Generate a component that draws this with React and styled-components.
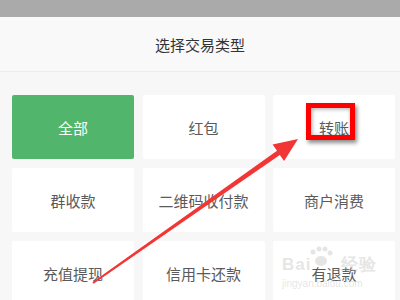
import React from 'react'
import styled, { createGlobalStyle } from 'styled-components'

const GlobalStyle = createGlobalStyle`
  body {
    margin: 0;
    background: #f7f7f7;
    font-family: "Noto Sans CJK SC", "Noto Sans", sans-serif;
  }
`

const Page = styled.div`
  position: relative;
  width: 400px;
  height: 300px;
  overflow: hidden;
  background: #f7f7f7;
`

const StatusBar = styled.div`
  height: 17px;
  background: #aaaaaa;
`

const Header = styled.header`
  height: 54px;
  display: flex;
  align-items: center;
  justify-content: center;
  background: #f9f9f9;
  border-bottom: 1px solid #ececec;
  color: #333;
  font-size: 15px;
`

const Grid = styled.div`
  display: grid;
  grid-template-columns: repeat(3, 122px);
  grid-auto-rows: 64px;
  column-gap: 8.5px;
  row-gap: 9px;
  padding: 23px 0 0 12px;
`

const Card = styled.div`
  position: relative;
  display: flex;
  align-items: center;
  justify-content: center;
  border-radius: 2px;
  font-size: 15px;
  background: ${p => (p.$active ? '#51b56c' : '#ffffff')};
  color: ${p => (p.$active ? '#ffffff' : '#5a5a5a')};
`

const Highlight = styled.div`
  position: absolute;
  left: 33px;
  top: 8px;
  width: 49px;
  height: 37px;
  box-sizing: border-box;
  border: 5px solid #ff0000;
  box-shadow: 2px 3px 4px rgba(0, 0, 0, 0.45), inset 1px 1px 4px rgba(0, 0, 0, 0.35);
`

const Overlay = styled.svg`
  position: absolute;
  left: 0;
  top: 0;
  pointer-events: none;
`

const Watermark = styled.div`
  position: absolute;
  left: 282px;
  top: 256px;
  display: flex;
  flex-direction: column;
  color: rgba(190, 190, 190, 0.4);
  font-family: "Liberation Sans", sans-serif;
  pointer-events: none;
`

const MarkTop = styled.div`
  display: flex;
  gap: 30px;
  font-size: 17px;
  font-weight: bold;
  letter-spacing: 1px;
  line-height: 18px;
`

const MarkBottom = styled.span`
  font-size: 10px;
  line-height: 12px;
  margin-top: 4px;
`

const types = [
  '全部', '红包', '转账',
  '群收款', '二维码收付款', '商户消费',
  '充值提现', '信用卡还款', '有退款',
]

const App = () => {
  return (
    <Page>
      <GlobalStyle />
      <StatusBar />
      <Header>选择交易类型</Header>
      <Grid>
        {types.map((t, i) => (
          <Card key={t} $active={i === 0}>
            {t}
            {i === 2 ? <Highlight /> : null}
          </Card>
        ))}
      </Grid>

      <Watermark>
        <MarkTop>
          <span>Bai</span>
          <span>经验</span>
        </MarkTop>
        <MarkBottom>jingyan.baidu.com</MarkBottom>
      </Watermark>

      <Overlay width="400" height="300" viewBox="0 0 400 300">
        <g fill="rgba(180,180,180,0.35)">
          <ellipse cx="321" cy="261" rx="6" ry="5" />
          <circle cx="313" cy="252" r="2.5" />
          <circle cx="319" cy="249" r="2.5" />
          <circle cx="325" cy="249" r="2.5" />
          <circle cx="330" cy="253" r="2.5" />
        </g>
        <polygon
          fill="#f23636"
          points="92.4,282.2 277,150.8 272.6,144.6 298,139 284.1,161 279.8,154.9 93.6,283.8"
        />
      </Overlay>
    </Page>
  )
}

export default App
